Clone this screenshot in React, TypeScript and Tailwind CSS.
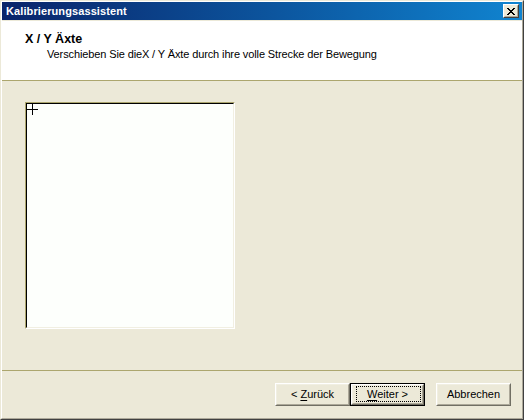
import React from "react";

function CloseGlyph() {
  return (
    <svg width="8" height="7" viewBox="0 0 8 7" shapeRendering="crispEdges">
      <path
        d="M0 0h2v1H0zM6 0h2v1H6zM1 1h2v1H1zM5 1h2v1H5zM2 2h4v1H2zM3 3h2v1H3zM2 4h4v1H2zM1 5h2v1H1zM5 5h2v1H5zM0 6h2v1H0zM6 6h2v1H6z"
        fill="#000"
      />
    </svg>
  );
}

function RaisedButton({
  children,
  isDefault = false,
}: {
  children: React.ReactNode;
  isDefault?: boolean;
}) {
  const inner = (
    <div className="h-full w-full border border-t-white border-l-white border-r-[#716f64] border-b-[#716f64]">
      <div className="relative h-full w-full border border-t-[#f1efe2] border-l-[#f1efe2] border-r-[#aca899] border-b-[#aca899] flex items-center justify-center bg-[#ece9d8] text-black">
        {children}
        {isDefault && (
          <div className="absolute left-[3px] right-[1px] top-[0px] bottom-[1px] border border-dotted border-black pointer-events-none" />
        )}
      </div>
    </div>
  );
  if (isDefault) {
    return <div className="w-[75px] h-[23px] border border-black">{inner}</div>;
  }
  return <div className="w-[75px] h-[23px]">{inner}</div>;
}

export default function App() {
  return (
    <div className="w-[524px] h-[420px] bg-[#ece9d8] font-['Liberation_Sans',Arial,sans-serif] text-[11px] leading-[13px] text-black overflow-hidden">
      <div className="h-full w-full border border-t-[#ece9d8] border-l-[#ece9d8] border-r-[#404040] border-b-[#404040]">
        <div className="h-full w-full border border-t-white border-l-white border-r-[#aca899] border-b-[#aca899] flex flex-col">
          {/* title bar */}
          <div className="h-[18px] shrink-0 bg-gradient-to-r from-[#0a246a] to-[#1084d0] flex items-start justify-between pl-[4px] pr-[3px]">
            <div className="pt-[3px] text-white font-bold leading-[13px] tracking-[0.1px]">
              Kalibrierungsassistent
            </div>
            <div className="mt-[2px] w-[16px] h-[14px] border border-t-white border-l-white border-r-[#404040] border-b-[#404040]">
              <div className="w-full h-full border border-t-[#ece9d8] border-l-[#ece9d8] border-r-[#aca899] border-b-[#aca899] bg-[#ece9d8] flex items-center justify-center">
                <CloseGlyph />
              </div>
            </div>
          </div>
          <div className="h-[1px] shrink-0" />
          {/* header */}
          <div className="h-[59px] shrink-0 bg-white pl-[23px] pt-[10px]">
            <div className="font-bold text-[12.5px] leading-[16px]">X / Y Äxte</div>
            <div className="ml-[22px] leading-[14px] tracking-[-0.12px]">
              Verschieben Sie dieX / Y Äxte durch ihre volle Strecke der Bewegung
            </div>
          </div>
          <div className="h-px shrink-0 bg-[#aca66e]" />
          {/* body */}
          <div className="flex-1 pl-[23px] pt-[21px]">
            <div className="w-[210px] h-[227px] border border-t-[#aca66e] border-l-[#aca66e] border-r-white border-b-white">
              <div className="w-full h-full border border-t-black border-l-black border-r-[#f1efe2] border-b-[#f1efe2] bg-[#fdfffc]">
                <svg width="12" height="11" viewBox="0 0 12 11" shapeRendering="crispEdges" className="block">
                  <path d="M0 5.5H11M5.5 0V11" stroke="#000" strokeWidth="1" fill="none" />
                </svg>
              </div>
            </div>
          </div>
          <div className="h-px shrink-0 bg-[#aca66e]" />
          {/* footer */}
          <div className="h-[47px] shrink-0 flex items-start justify-end pt-[12px] pr-[11px]">
            <RaisedButton>
              <span>
                &lt; <span className="underline underline-offset-[2px]">Z</span>urück
              </span>
            </RaisedButton>
            <RaisedButton isDefault>
              <span>
                <span className="underline underline-offset-[2px]">W</span>eiter &gt;
              </span>
            </RaisedButton>
            <div className="w-[11px]" />
            <RaisedButton>
              <span>Abbrechen</span>
            </RaisedButton>
          </div>
        </div>
      </div>
    </div>
  );
}
